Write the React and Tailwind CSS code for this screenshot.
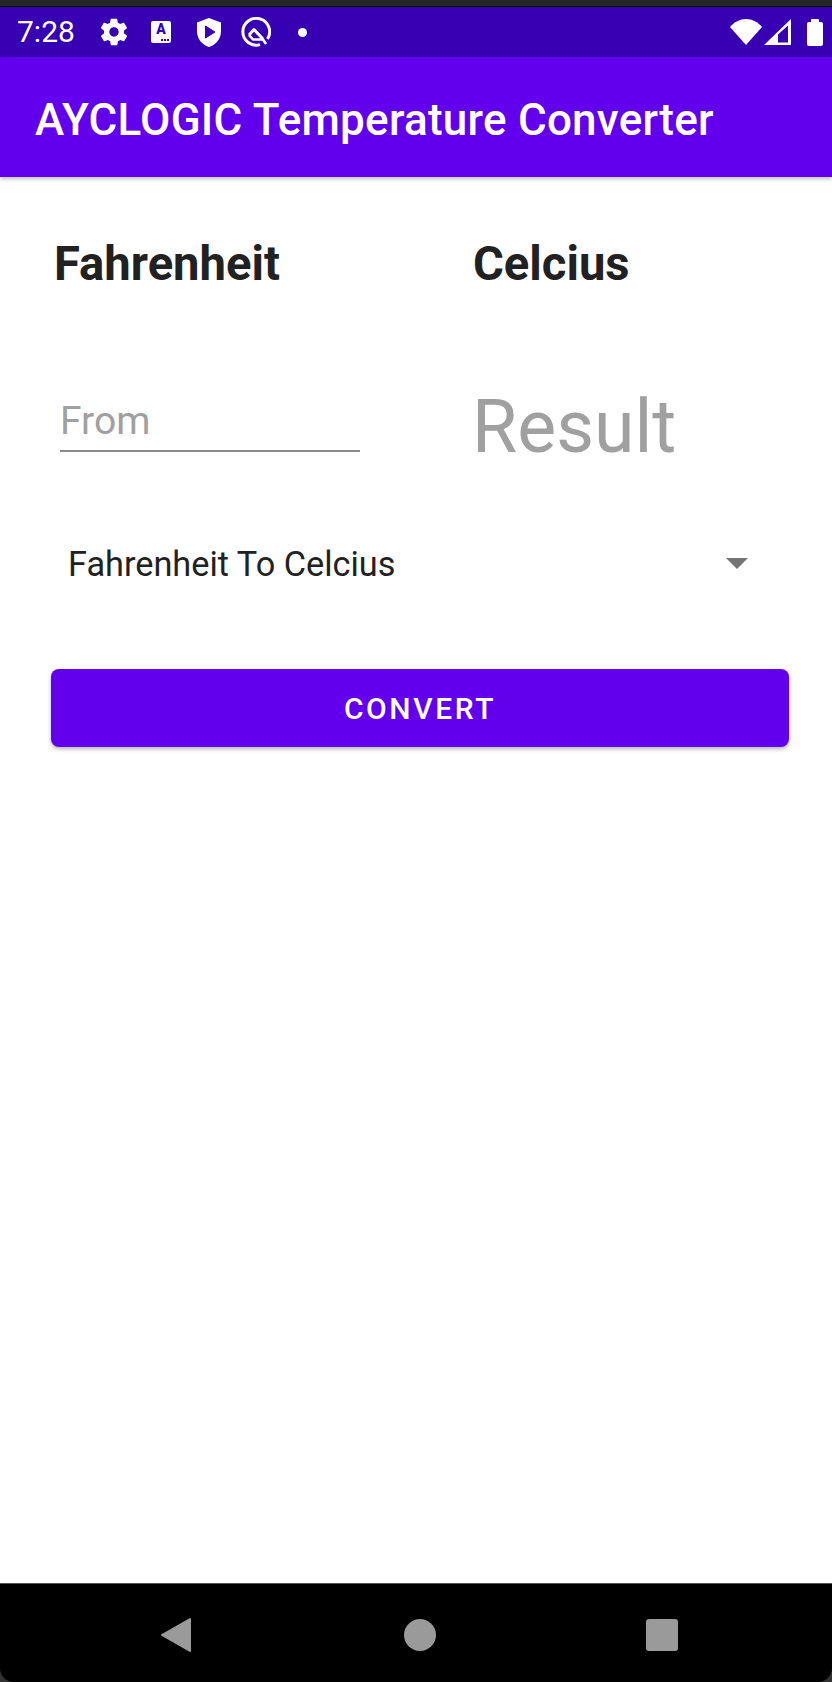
import React from "react";

const roboto = { fontFamily: "Roboto, sans-serif" };

function StatusIcons() {
  return (
    <div className="flex items-center">
      {/* gear */}
      <svg width="32" height="32" viewBox="0 0 24 24" className="ml-[24px]" fill="#fff">
        <path d="M19.4 13c.04-.32.1-.66.1-1s-.06-.68-.1-1l2.1-1.65c.2-.15.25-.42.13-.64l-2-3.46c-.12-.22-.4-.3-.6-.22l-2.5 1c-.52-.4-1.08-.73-1.7-.98l-.37-2.65c-.06-.24-.27-.4-.5-.4h-4c-.25 0-.46.16-.5.4l-.37 2.65c-.62.25-1.18.58-1.7.98l-2.5-1c-.22-.08-.48 0-.6.22l-2 3.46c-.13.22-.07.49.12.64L4.6 11c-.04.32-.1.66-.1 1s.06.68.1 1l-2.1 1.65c-.2.15-.25.42-.12.64l2 3.46c.12.22.38.3.6.22l2.5-1c.52.4 1.08.73 1.7.98l.37 2.65c.04.24.25.4.5.4h4c.25 0 .46-.16.5-.4l.37-2.65c.62-.25 1.18-.58 1.7-.98l2.5 1c.22.08.48 0 .6-.22l2-3.46c.12-.22.07-.49-.13-.64L19.4 13zM12 15.5c-1.93 0-3.5-1.57-3.5-3.5s1.57-3.5 3.5-3.5 3.5 1.57 3.5 3.5-1.57 3.5-3.5 3.5z" />
      </svg>
      {/* A box */}
      <div className="relative ml-[21px] w-[20px] h-[22px] bg-white rounded-[2px] flex items-start justify-center">
        <span className="text-[14px] leading-[17px] font-black text-[#3700b3]" style={roboto}>A</span>
        <div className="absolute bottom-[2px] right-[2px] flex gap-px">
          <div className="w-[2px] h-[2px] bg-[#3700b3]"></div>
          <div className="w-[2px] h-[2px] bg-[#3700b3]"></div>
          <div className="w-[2px] h-[2px] bg-[#3700b3]"></div>
        </div>
      </div>
      {/* shield */}
      <svg width="24" height="29" viewBox="0 0 24 29" className="ml-[26px]">
        <path d="M12 0 L24 4.5 V13 C24 20.5 19.5 26.5 12 29 C4.5 26.5 0 20.5 0 13 V4.5 Z" fill="#fff" />
        <path d="M8.5 8 L18 14 L8.5 20 Z" fill="#3700b3" stroke="#3700b3" strokeLinejoin="round" />
      </svg>
      {/* Q */}
      <svg width="30" height="30" viewBox="0 0 30 30" className="ml-[20px]" fill="none" stroke="#fff">
        <path d="M19 27.6 A13.4 13.4 0 1 1 26.5 22" strokeWidth="3" />
        <path d="M8 18 L13 12.5 L21.5 21.5" strokeWidth="3" strokeLinejoin="round" />
        <path d="M8 18 L12 22.5 H22" strokeWidth="2.6" strokeLinejoin="round" />
        <path d="M21 21 L25 27" strokeWidth="2.6" />
      </svg>
      <div className="ml-[27px] w-[9px] h-[9px] rounded-full bg-white"></div>
    </div>
  );
}

function StatusBar() {
  return (
    <div className="h-[57px] bg-[#3700b3] flex flex-col text-white">
      <div className="h-[6px] bg-[#262626]"></div>
      <div className="h-px bg-black"></div>
      <div className="flex-1 flex items-center justify-between pl-[17px] pr-[9px]">
        <div className="flex items-center">
          <span className="w-[57px] text-[30px] leading-none font-normal" style={roboto}>7:28</span>
          <StatusIcons />
        </div>
        <div className="flex items-center">
          <svg width="32" height="26" viewBox="0 0 32 26" fill="#fff">
            <path d="M16 26 L0 8 C4 3 10 0 16 0 C22 0 28 3 32 8 Z" />
          </svg>
          <svg width="27" height="26" viewBox="0 0 27 26" className="ml-[2px]">
            <path d="M0 26 L27 0 V26 Z" fill="#fff" />
            <path d="M14 15.5 L24 6.5 V23.5 H14 Z" fill="#3700b3" />
          </svg>
          <div className="ml-[16px] flex flex-col items-center">
            <div className="w-[8px] h-[3px] bg-white rounded-t-[1px]"></div>
            <div className="w-[16px] h-[24px] bg-white rounded-[2px]"></div>
          </div>
        </div>
      </div>
    </div>
  );
}

export default function App() {
  return (
    <div className="w-[832px] h-[1682px] flex flex-col bg-white overflow-hidden" style={roboto}>
      <StatusBar />

      {/* APP BAR */}
      <div className="h-[120px] bg-[#6200ee] shadow-[0_2px_4px_rgba(0,0,0,0.25)] flex items-center pl-[35px] pt-[6px] z-10">
        <span className="text-white text-[44px] font-medium tracking-[0.25px]">AYCLOGIC Temperature Converter</span>
      </div>

      <div className="flex-1 flex flex-col">
        {/* LABELS */}
        <div className="flex pl-[54px] pt-[60px] text-[#212121] text-[47.2px] leading-[54px] font-bold">
          <div className="w-[419px]">Fahrenheit</div>
          <div>Celcius</div>
        </div>

        {/* INPUT AND RESULT */}
        <div className="flex pl-[60px] mt-[101px]">
          <div className="w-[300px] h-[60px] border-b-2 border-[#8a8a8a] text-[39px] leading-[46px] pt-[6px] text-[#a0a0a0]">From</div>
          <div className="ml-[112px] mt-[-8px] text-[73.4px] leading-[86px] text-[#a0a0a0]">Result</div>
        </div>

        {/* SPINNER */}
        <div className="flex items-center justify-between pl-[68px] pr-[84px] mt-[74px]">
          <span className="text-[34.3px] leading-[40px] text-[#212121]">Fahrenheit To Celcius</span>
          <div className="mb-[2px] w-0 h-0 border-l-[11px] border-r-[11px] border-t-[11px] border-l-transparent border-r-transparent border-t-[#757575]"></div>
        </div>

        {/* BUTTON */}
        <button className="mt-[85px] ml-[51px] mr-[43px] h-[78px] bg-[#6200ee] rounded-[8px] shadow-[0_2px_4px_rgba(0,0,0,0.3)] text-white text-[30px] font-medium tracking-[2.6px]">
          CONVERT
        </button>
      </div>

      {/* NAV BAR */}
      <div className="bg-[#333333]">
        <div className="h-[99px] bg-black border-t border-[#555555] rounded-b-[14px] flex items-center justify-between pl-[161px] pr-[154px] pt-[3px]">
          <svg width="30" height="36" viewBox="0 0 30 36" fill="#9a9a9a">
            <path d="M29 2 V34 L1 18 Z" stroke="#9a9a9a" strokeLinejoin="round" strokeWidth="2" />
          </svg>
          <div className="ml-[2px] w-[32px] h-[32px] rounded-full bg-[#9a9a9a]"></div>
          <div className="w-[32px] h-[32px] rounded-[3px] bg-[#9a9a9a]"></div>
        </div>
      </div>
    </div>
  );
}
